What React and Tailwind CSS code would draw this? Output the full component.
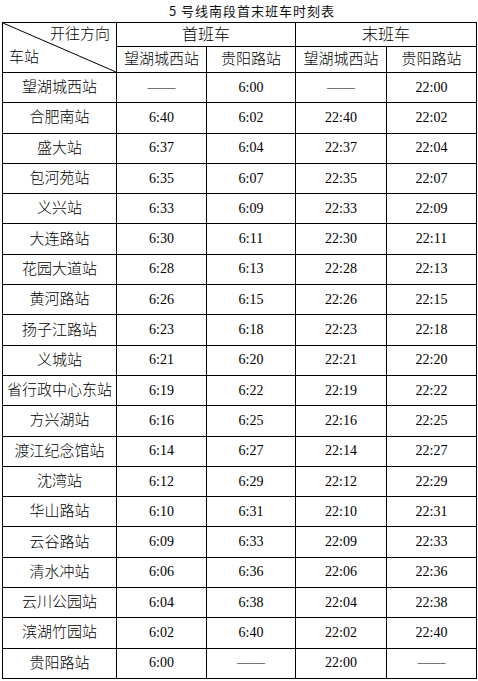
const rows = [
  ["望湖城西站", "——", "6:00", "——", "22:00"],
  ["合肥南站", "6:40", "6:02", "22:40", "22:02"],
  ["盛大站", "6:37", "6:04", "22:37", "22:04"],
  ["包河苑站", "6:35", "6:07", "22:35", "22:07"],
  ["义兴站", "6:33", "6:09", "22:33", "22:09"],
  ["大连路站", "6:30", "6:11", "22:30", "22:11"],
  ["花园大道站", "6:28", "6:13", "22:28", "22:13"],
  ["黄河路站", "6:26", "6:15", "22:26", "22:15"],
  ["扬子江路站", "6:23", "6:18", "22:23", "22:18"],
  ["义城站", "6:21", "6:20", "22:21", "22:20"],
  ["省行政中心东站", "6:19", "6:22", "22:19", "22:22"],
  ["方兴湖站", "6:16", "6:25", "22:16", "22:25"],
  ["渡江纪念馆站", "6:14", "6:27", "22:14", "22:27"],
  ["沈湾站", "6:12", "6:29", "22:12", "22:29"],
  ["华山路站", "6:10", "6:31", "22:10", "22:31"],
  ["云谷路站", "6:09", "6:33", "22:09", "22:33"],
  ["清水冲站", "6:06", "6:36", "22:06", "22:36"],
  ["云川公园站", "6:04", "6:38", "22:04", "22:38"],
  ["滨湖竹园站", "6:02", "6:40", "22:02", "22:40"],
  ["贵阳路站", "6:00", "——", "22:00", "——"],
];

const App = () => {
  return (
    <div className="w-[478px] h-[681px] bg-white text-black font-light font-['Liberation_Serif','Noto_Sans_CJK_SC',serif]">
      <div className="h-[22px] flex items-center justify-center pl-[26px] text-[13px] tracking-[1px] font-normal font-['Noto_Sans_CJK_SC',sans-serif] text-[#111]">
        5 号线南段首末班车时刻表
      </div>
      <table className="ml-[2px] w-[474px] table-fixed border-collapse text-[15px] text-center">
        <colgroup>
          <col className="w-[114px]" />
          <col className="w-[90px]" />
          <col className="w-[89px]" />
          <col className="w-[91px]" />
          <col className="w-[90px]" />
        </colgroup>
        <thead>
          <tr className="h-[24px]">
            <th rowSpan={2} className="relative border border-black p-0 font-light">
              <svg className="absolute inset-0 w-full h-full" preserveAspectRatio="none" viewBox="0 0 100 100">
                <line x1="0" y1="0" x2="100" y2="100" stroke="black" strokeWidth="1" vectorEffect="non-scaling-stroke" />
              </svg>
              <div className="relative flex flex-col h-[49px] px-[6px] leading-none">
                <span className="self-end pt-[4px]">开往方向</span>
                <span className="self-start pt-[8px]">车站</span>
              </div>
            </th>
            <th colSpan={2} className="border border-black p-0 font-light text-[16px] leading-none">首班车</th>
            <th colSpan={2} className="border border-black p-0 font-light text-[16px] leading-none">末班车</th>
          </tr>
          <tr className="h-[25px]">
            <th className="border border-black p-0 font-light leading-none">望湖城西站</th>
            <th className="border border-black p-0 font-light leading-none">贵阳路站</th>
            <th className="border border-black p-0 font-light leading-none">望湖城西站</th>
            <th className="border border-black p-0 font-light leading-none">贵阳路站</th>
          </tr>
        </thead>
        <tbody>
          {rows.map((r) => (
            <tr key={r[0]} className="h-[30.3px]">
              {r.map((c, i) => (
                <td key={i} className={`border border-black p-0 leading-none ${i === 0 ? "text-[15px]" : "text-[14px]"}`}>
                  {c}
                </td>
              ))}
            </tr>
          ))}
        </tbody>
      </table>
    </div>
  );
};

export default App;
